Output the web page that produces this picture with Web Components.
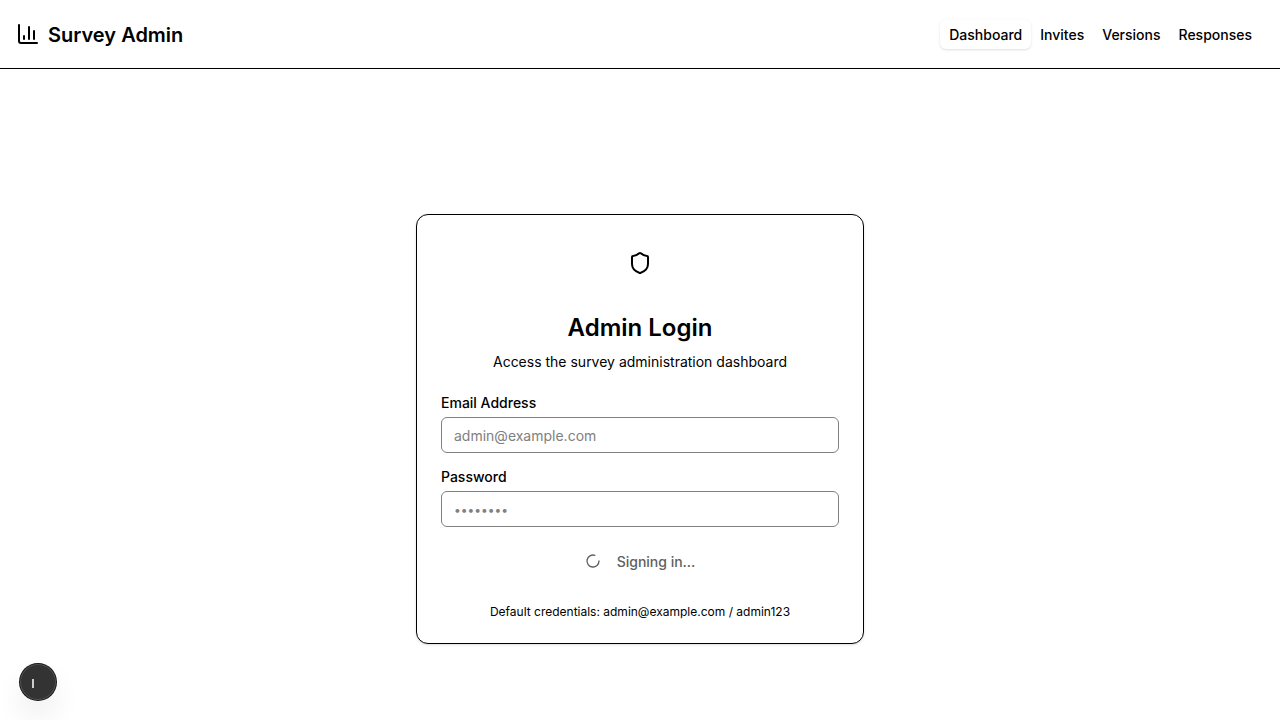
<!DOCTYPE html>
<html lang="en">
<head>
<meta charset="utf-8">
<title>Survey Admin</title>
<style>
  body { display: flex; flex-direction: column; min-height: 100vh; margin: 0; background: #fff; color: #000; font: 14px/20px Inter, "Liberation Sans", sans-serif; }
</style>
</head>
<body>
<admin-header>
  <nav-link href="#dashboard" active>Dashboard</nav-link>
  <nav-link href="#invites">Invites</nav-link>
  <nav-link href="#versions">Versions</nav-link>
  <nav-link href="#responses">Responses</nav-link>
</admin-header>
<login-page>
  <login-card>
    <form-field label="Email Address" type="email" placeholder="admin@example.com"></form-field>
    <form-field label="Password" type="password" placeholder="••••••••"></form-field>
    <loading-button>Signing in...</loading-button>
    <span slot="footer">Default credentials: admin@example.com / admin123</span>
  </login-card>
</login-page>
<dev-badge></dev-badge>

<script>
  const define = (name, render) => customElements.define(name, class extends HTMLElement {
    connectedCallback() {
      if (!this.shadowRoot) this.attachShadow({ mode: "open" }).innerHTML = render(this);
    }
  });

  define("admin-header", () => `
    <style>
      :host { display: block; border-bottom: 1px solid #000; }
      header { display: flex; align-items: center; justify-content: space-between; padding: 16px; }
      .brand { display: flex; align-items: center; gap: 8px; }
      h1 { margin: 0; padding-top: 2px; font-size: 20px; line-height: 28px; font-weight: 600; }
      svg { display: block; }
      nav { display: flex; align-items: flex-end; height: 30px; padding: 3px; }
    </style>
    <header>
      <div class="brand">
        <svg width="24" height="24" viewBox="0 0 24 24" fill="none" stroke="currentColor" stroke-width="2" stroke-linecap="round" stroke-linejoin="round" aria-hidden="true">
          <path d="M3 3v16a2 2 0 0 0 2 2h16"/><path d="M18 17V9"/><path d="M13 17V5"/><path d="M8 17v-3"/>
        </svg>
        <h1>Survey Admin</h1>
      </div>
      <nav><slot></slot></nav>
    </header>`);

  define("nav-link", el => `
    <style>
      :host { display: block; }
      a { display: block; padding: 4px 8px 3px; border: 1px solid transparent; border-radius: 6px;
          color: inherit; text-decoration: none; font-weight: 500; }
      :host([active]) a { background: #fff; box-shadow: 0 1px 3px rgb(0 0 0 / .1), 0 1px 2px -1px rgb(0 0 0 / .1); }
    </style>
    <a href="${el.getAttribute("href")}"><slot></slot></a>`);

  define("login-page", () => `
    <style>
      :host { display: flex; flex: 1; align-items: center; justify-content: center; padding: 85px 16px 16px; box-sizing: border-box; }
    </style>
    <slot></slot>`);

  define("login-card", () => `
    <style>
      :host { display: block; box-sizing: border-box; width: 100%; max-width: 448px; padding: 24px 24px 23px;
              border: 1px solid #000; border-radius: 12px; background: #fff;
              box-shadow: 0 1px 3px rgb(0 0 0 / .1), 0 1px 2px -1px rgb(0 0 0 / .1); }
      .intro { display: flex; flex-direction: column; align-items: center; text-align: center; }
      .icon { display: grid; place-items: center; width: 48px; height: 48px; margin-bottom: 25px; }
      h2 { margin: 0 0 8px; font-size: 24px; line-height: 32px; font-weight: 600; }
      p { margin: 0; }
      form { display: flex; flex-direction: column; gap: 16px; margin: 23px 0 25px; }
      .footer { text-align: center; font-size: 12px; line-height: 16px; }
    </style>
    <div class="intro">
      <div class="icon">
        <svg width="24" height="24" viewBox="0 0 24 24" fill="none" stroke="currentColor" stroke-width="2" stroke-linecap="round" stroke-linejoin="round" aria-hidden="true">
          <path d="M20 13c0 5-3.500 7.500-7.660 8.950a1 1 0 0 1-.67-.01C7.500 20.500 4 18 4 13V6a1 1 0 0 1 1-1c2 0 4.500-1.200 6.240-2.720a1.170 1.170 0 0 1 1.520 0C14.510 3.810 17 5 19 5a1 1 0 0 1 1 1z"/>
        </svg>
      </div>
      <h2>Admin Login</h2>
      <p>Access the survey administration dashboard</p>
    </div>
    <form><slot></slot></form>
    <div class="footer"><slot name="footer"></slot></div>`);

  define("form-field", el => `
    <style>
      :host { display: flex; flex-direction: column; gap: 6px; }
      label { line-height: 16px; font-weight: 500; }
      input { box-sizing: border-box; width: 100%; height: 36px; margin: 0; padding: 4px 12px;
              border: 1px solid #808080; border-radius: 6px; background: #fff; color: #000;
              font: inherit; outline: 0; }
      input::placeholder { color: #808080; opacity: 1; }
      input[type="password"] { font-size: 12px; }
    </style>
    <label for="field">${el.getAttribute("label")}</label>
    <input id="field" type="${el.getAttribute("type")}" placeholder="${el.getAttribute("placeholder")}" disabled>`);

  define("loading-button", () => `
    <style>
      :host { display: block; }
      button { display: flex; align-items: center; justify-content: center; gap: 16px; width: 100%; height: 36px;
               padding: 0 16px; border: 0; border-radius: 6px; background: none; color: #606060;
               font: inherit; font-weight: 500; }
      span { padding-top: 2px; }
    </style>
    <button type="submit" disabled>
      <svg width="16" height="16" viewBox="0 0 24 24" fill="none" stroke="currentColor" stroke-width="2" stroke-linecap="round" aria-hidden="true">
        <path d="M21 12a9 9 0 1 1-6.219-8.560"/>
      </svg>
      <span><slot></slot></span>
    </button>`);

  define("dev-badge", () => `
    <style>
      :host { position: fixed; left: 20px; bottom: 20px; }
      button { display: grid; place-items: center; width: 36px; height: 36px; padding: 0; border: 0; border-radius: 50%;
               background: #333;
               box-shadow: 0 0 0 1px #171717, inset 0 0 0 1px rgb(255 255 255 / .14), 0 16px 32px -8px rgb(0 0 0 / .24); }
    </style>
    <button type="button" aria-label="Open developer tools">
      <svg width="36" height="36" viewBox="0 0 36 36" aria-hidden="true"><path d="M13 15v9" stroke="#ccc" stroke-width="2"/></svg>
    </button>`);
</script>
</body>
</html>
